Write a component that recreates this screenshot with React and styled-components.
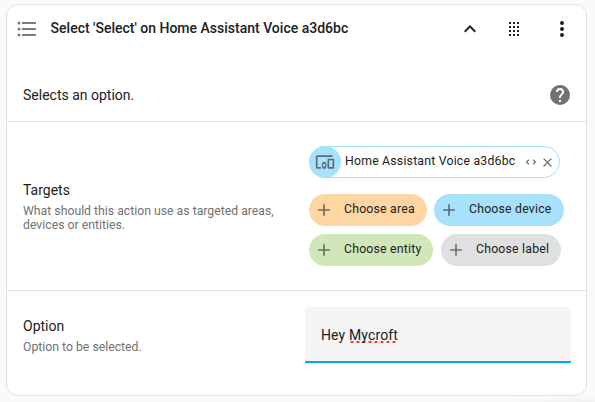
import React from "react";
import styled, { createGlobalStyle } from "styled-components";

const GlobalStyle = createGlobalStyle`
  * { box-sizing: border-box; }
  body {
    margin: 0;
    background: #fafafa;
    color: #212121;
    font-family: Roboto, "Liberation Sans", sans-serif;
    overflow: hidden;
  }
`;

const paths = {
  list: "M7,5H21V7H7V5M7,13V11H21V13H7M4,4.5A1.5,1.5 0 0,1 5.5,6A1.5,1.5 0 0,1 4,7.5A1.5,1.5 0 0,1 2.5,6A1.5,1.5 0 0,1 4,4.5M4,10.5A1.5,1.5 0 0,1 5.5,12A1.5,1.5 0 0,1 4,13.5A1.5,1.5 0 0,1 2.5,12A1.5,1.5 0 0,1 4,10.5M7,19V17H21V19H7M4,16.5A1.5,1.5 0 0,1 5.5,18A1.5,1.5 0 0,1 4,19.5A1.5,1.5 0 0,1 2.5,18A1.5,1.5 0 0,1 4,16.5Z",
  chevronUp: "M7.41,15.41L12,10.83L16.59,15.41L18,14L12,8L6,14L7.41,15.41Z",
  drag: "M7,19V17H9V19H7M11,19V17H13V19H11M15,19V17H17V19H15M7,15V13H9V15H7M11,15V13H13V15H11M15,15V13H17V15H15M7,11V9H9V11H7M11,11V9H13V11H11M15,11V9H17V11H15M7,7V5H9V7H7M11,7V5H13V7H11M15,7V5H17V7H15Z",
  dots: "M12,16A2,2 0 0,1 14,18A2,2 0 0,1 12,20A2,2 0 0,1 10,18A2,2 0 0,1 12,16M12,10A2,2 0 0,1 14,12A2,2 0 0,1 12,14A2,2 0 0,1 10,12A2,2 0 0,1 12,10M12,4A2,2 0 0,1 14,6A2,2 0 0,1 12,8A2,2 0 0,1 10,6A2,2 0 0,1 12,4Z",
  help: "M15.07,11.25L14.17,12.17C13.45,12.89 13,13.5 13,15H11V14.5C11,13.39 11.45,12.39 12.17,11.67L13.41,10.41C13.78,10.05 14,9.55 14,9C14,7.89 13.1,7 12,7A2,2 0 0,0 10,9H8A4,4 0 0,1 12,5A4,4 0 0,1 16,9C16,9.88 15.64,10.67 15.07,11.25M13,19H11V17H13M12,2A10,10 0 0,0 2,12A10,10 0 0,0 12,22A10,10 0 0,0 22,12C22,6.47 17.5,2 12,2Z",
  devices: "M3 6H21V4H3C1.9 4 1 4.9 1 6V18C1 19.1 1.9 20 3 20H7V18H3V6M13 12H9V13.78C8.39 14.33 8 15.11 8 16C8 16.89 8.39 17.67 9 18.22V20H13V18.22C13.61 17.67 14 16.88 14 16S13.61 14.33 13 13.78V12M11 17.5C10.17 17.5 9.5 16.83 9.5 16S10.17 14.5 11 14.5 12.5 15.17 12.5 16 11.83 17.5 11 17.5M22 8H16C15.5 8 15 8.5 15 9V19C15 19.5 15.5 20 16 20H22C22.5 20 23 19.5 23 19V9C23 8.5 22.5 8 22 8M21 18H17V10H21V18Z",
  plus: "M19,13H13V19H11V13H5V11H11V5H13V11H19V13Z",
  unfold: "M18.17,12L15,8.83L16.41,7.41L21,12L16.41,16.58L15,15.17L18.17,12M5.83,12L9,15.17L7.59,16.59L3,12L7.59,7.42L9,8.83L5.83,12Z",
  close: "M19,6.41L17.59,5L12,10.59L6.41,5L5,6.41L10.59,12L5,17.59L6.41,19L12,13.41L17.59,19L19,17.59L13.41,12L19,6.41Z",
};

const Svg = styled.svg`
  display: block;
  flex: none;
  width: ${(p) => p.$size}px;
  height: ${(p) => p.$size}px;
  fill: ${(p) => p.$color};
`;

const Icon = ({ name, size = 24, color = "#212121" }) => (
  <Svg viewBox="0 0 24 24" $size={size} $color={color} aria-hidden="true">
    <path d={paths[name]} />
  </Svg>
);

const Page = styled.main`
  height: 402px;
  padding: 4px 8px 6px 6px;
  background: radial-gradient(ellipse 90px 8px at 585px 404px, #efefef, #fafafa);
`;

const Card = styled.section`
  height: 392px;
  background: #fff;
  border: 1px solid #e0e0e0;
  border-radius: 12px;
`;

const Header = styled.header`
  display: flex;
  align-items: center;
  height: 48px;
  padding: 0 12px 0 8px;
`;

const Title = styled.h3`
  flex: 1;
  margin: 0 0 2px 11.6px;
  font-size: 14px;
  line-height: 20px;
  font-weight: 500;
`;

const IconButton = styled.button`
  display: flex;
  padding: 0;
  border: 0;
  background: none;
  margin-left: ${(p) => p.$gap || 0}px;
`;

const Description = styled.div`
  display: flex;
  align-items: center;
  justify-content: space-between;
  height: 68px;
  padding: 16px 14px 0 16px;
  font-size: 14px;
  line-height: 20px;
`;

const Row = styled.div`
  display: flex;
  height: ${(p) => p.$height}px;
  padding-left: 16px;
  border-top: 1px solid #e0e0e0;
`;

const Label = styled.div`
  width: ${(p) => p.$width}px;
  padding-top: ${(p) => p.$top}px;
  flex: none;
`;

const Name = styled.div`
  font-size: 14px;
  line-height: 20px;
`;

const Hint = styled.div`
  margin-top: 4px;
  width: 262px;
  font-size: 12.25px;
  line-height: 14px;
  color: #727272;
`;

const Targets = styled.div`
  padding: 24px 0 0 24px;
`;

const ChipRow = styled.div`
  display: flex;
  gap: ${(p) => p.$gap}px;
  margin-bottom: 8px;
`;

const ChipText = styled.span`
  font-size: 12.25px;
  line-height: 20px;
  letter-spacing: 0.22px;
  white-space: nowrap;
  margin-top: -2px;
`;

const DeviceChip = styled.div`
  display: flex;
  align-items: center;
  width: 251px;
  height: 32px;
  margin-bottom: 16px;
  border: 1px solid #a8e1fb;
  border-radius: 16px;
`;

const DeviceBadge = styled.span`
  display: grid;
  place-items: center;
  width: 32px;
  height: 32px;
  margin: 0 4px 0 -1px;
  border-radius: 50%;
  background: #a8e1fb;
`;

const ChipActions = styled.span`
  display: flex;
  align-items: center;
  gap: 2px;
  margin: 0 4px 0 auto;
`;

const ChooseChip = styled.button`
  display: flex;
  align-items: center;
  width: ${(p) => p.$width}px;
  height: 32px;
  padding: 0 0 0 5px;
  gap: 10px;
  border: 0;
  border-radius: 16px;
  background: ${(p) => p.$color};
  color: #212121;
  font-family: inherit;
`;

const Field = styled.div`
  width: 266px;
  height: 56px;
  margin-top: 16px;
  padding: 18px 16px;
  background: #f4f4f4;
  border-bottom: 2px solid #03a9f4;
  border-radius: 4px 4px 0 0;
  font-size: 14px;
  line-height: 20px;
  letter-spacing: 0.13px;
`;

const Misspelled = styled.span`
  background: radial-gradient(ellipse 2px 1.3px, #ff3030 60%, transparent) 0 100% / 6px 2px repeat-x;
`;

const Choose = ({ text, color, width }) => (
  <ChooseChip $color={color} $width={width}>
    <Icon name="plus" size={20} color="rgba(33,33,33,.6)" />
    <ChipText>{text}</ChipText>
  </ChooseChip>
);

export default function App() {
  return (
    <>
      <GlobalStyle />
      <Page>
        <Card>
          <Header>
            <Icon name="list" color="#7b7b7b" />
            <Title>Select 'Select' on Home Assistant Voice a3d6bc</Title>
            <IconButton aria-label="Collapse"><Icon name="chevronUp" /></IconButton>
            <IconButton $gap={20} aria-label="Reorder"><Icon name="drag" /></IconButton>
            <IconButton $gap={24} aria-label="Menu"><Icon name="dots" /></IconButton>
          </Header>
          <Description>
            Selects an option.
            <Icon name="help" color="#727272" />
          </Description>
          <Row $height={169}>
            <Label $width={262} $top={58}>
              <Name>Targets</Name>
              <Hint>What should this action use as targeted areas, devices or entities.</Hint>
            </Label>
            <Targets>
              <DeviceChip>
                <DeviceBadge><Icon name="devices" size={20} color="rgba(33,33,33,.6)" /></DeviceBadge>
                <ChipText>Home Assistant Voice a3d6bc</ChipText>
                <ChipActions>
                  <Icon name="unfold" size={14} color="#666" />
                  <Icon name="close" size={15} color="#727272" />
                </ChipActions>
              </DeviceChip>
              <ChipRow $gap={7}>
                <Choose text="Choose area" color="#fed6a4" width={118} />
                <Choose text="Choose device" color="#a8e1fb" width={130} />
              </ChipRow>
              <ChipRow $gap={8}>
                <Choose text="Choose entity" color="#d2e7b9" width={124} />
                <Choose text="Choose label" color="#e0e0e0" width={120} />
              </ChipRow>
            </Targets>
          </Row>
          <Row $height={104}>
            <Label $width={282} $top={25}>
              <Name>Option</Name>
              <Hint>Option to be selected.</Hint>
            </Label>
            <Field>Hey <Misspelled>Mycroft</Misspelled></Field>
          </Row>
        </Card>
      </Page>
    </>
  );
}
